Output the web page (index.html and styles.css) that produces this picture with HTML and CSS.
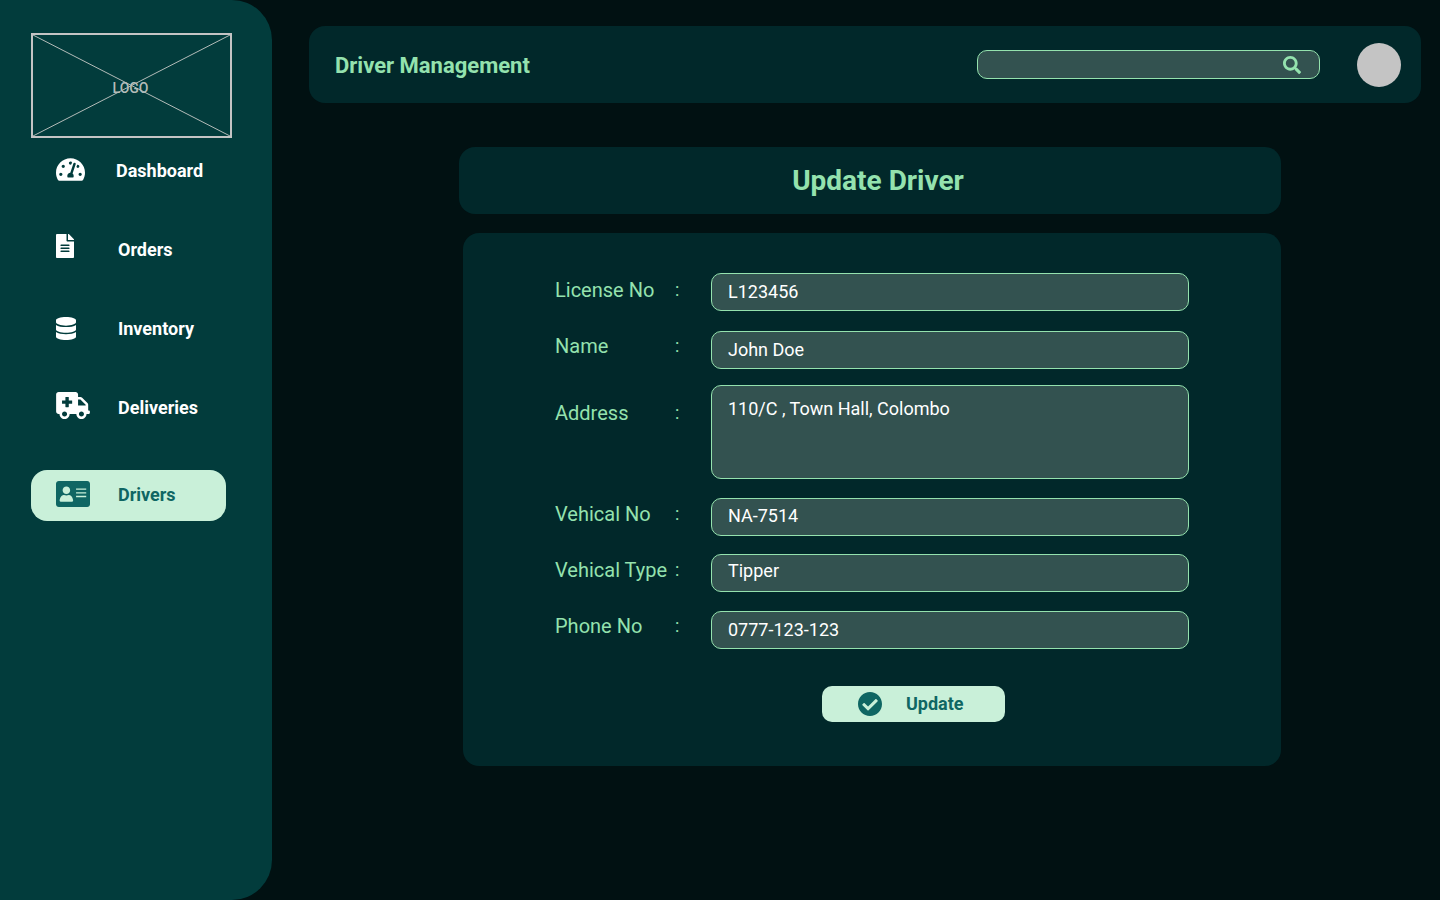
FILE: index.html
```html
<!DOCTYPE html>
<html lang="en">
<head>
<meta charset="utf-8">
<title>Driver Management</title>
<link rel="stylesheet" href="styles.css">
</head>
<body>
<aside class="sidebar">
  <div class="logo">
    <svg class="logo-cross" viewBox="0 0 198 102" preserveAspectRatio="none"><path d="M0 0L198 102M198 0L0 102"/></svg>
    <span class="logo-text">LOGO</span>
  </div>
  <nav class="nav">
    <a class="nav-item item-dashboard">
      <svg class="icon icon-dashboard" viewBox="0 32 576 448"><path d="M288 32C128.94 32 0 160.94 0 320c0 52.8 14.25 102.26 39.06 144.8 5.61 9.62 16.3 15.2 27.44 15.2h443c11.14 0 21.83-5.58 27.44-15.2C561.75 422.26 576 372.8 576 320c0-159.06-128.94-288-288-288zm0 64c14.71 0 26.58 10.13 30.32 23.65-1.11 2.26-2.64 4.23-3.45 6.67l-9.22 27.67c-5.13 3.49-10.97 6.01-17.64 6.01-17.67 0-32-14.33-32-32S270.33 96 288 96zM96 384c-17.67 0-32-14.33-32-32s14.33-32 32-32 32 14.33 32 32-14.33 32-32 32zm48-160c-17.67 0-32-14.33-32-32s14.33-32 32-32 32 14.33 32 32-14.33 32-32 32zm246.77-72.41l-61.33 184C343.13 347.33 352 364.54 352 384c0 11.72-3.38 22.55-8.88 32H232.88c-5.5-9.45-8.88-20.28-8.88-32 0-33.94 26.5-61.43 59.9-63.59l61.34-184.01c4.17-12.56 17.73-19.45 30.36-15.17 12.57 4.19 19.35 17.79 15.17 30.36zm14.66 57.2l15.52-46.55c3.47-1.29 7.13-2.23 11.05-2.23 17.67 0 32 14.33 32 32s-14.33 32-32 32c-11.38-.01-20.89-6.28-26.57-15.22zM480 384c-17.67 0-32-14.33-32-32s14.33-32 32-32 32 14.33 32 32-14.33 32-32 32z"/></svg>
      <span>Dashboard</span>
    </a>
    <a class="nav-item item-orders">
      <svg class="icon icon-orders" viewBox="0 0 384 512"><path d="M224 136V0H24C10.7 0 0 10.7 0 24v464c0 13.3 10.7 24 24 24h336c13.3 0 24-10.7 24-24V160H248c-13.2 0-24-10.8-24-24zm64 236c0 6.6-5.4 12-12 12H108c-6.6 0-12-5.4-12-12v-8c0-6.6 5.4-12 12-12h168c6.6 0 12 5.4 12 12v8zm0-64c0 6.6-5.4 12-12 12H108c-6.6 0-12-5.4-12-12v-8c0-6.6 5.4-12 12-12h168c6.6 0 12 5.4 12 12v8zm0-72v8c0 6.6-5.4 12-12 12H108c-6.6 0-12-5.4-12-12v-8c0-6.6 5.4-12 12-12h168c6.6 0 12 5.4 12 12zm96-114.1v6.1H256V0h6.1c6.4 0 12.5 2.5 17 7l97.9 98c4.5 4.5 7 10.6 7 16.9z"/></svg>
      <span>Orders</span>
    </a>
    <a class="nav-item item-inventory">
      <svg class="icon icon-inventory" viewBox="0 0 448 512" preserveAspectRatio="none"><path d="M448 73.143v45.714C448 159.143 347.667 192 224 192S0 159.143 0 118.857V73.143C0 32.857 100.333 0 224 0s224 32.857 224 73.143zM448 176v102.857C448 319.143 347.667 352 224 352S0 319.143 0 278.857V176c48.125 33.143 136.208 48.572 224 48.572S399.874 209.143 448 176zm0 160v102.857C448 479.143 347.667 512 224 512S0 479.143 0 438.857V336c48.125 33.143 136.208 48.572 224 48.572S399.874 369.143 448 336z"/></svg>
      <span>Inventory</span>
    </a>
    <a class="nav-item item-deliveries">
      <svg class="icon icon-deliveries" viewBox="0 0 640 512"><path d="M624 352h-16V243.9c0-12.7-5.1-24.9-14.1-33.9L494 110.1c-9-9-21.2-14.1-33.9-14.1H416V48c0-26.5-21.5-48-48-48H48C21.5 0 0 21.5 0 48v320c0 26.5 21.5 48 48 48h16c0 53 43 96 96 96s96-43 96-96h128c0 53 43 96 96 96s96-43 96-96h48c8.8 0 16-7.2 16-16v-32c0-8.8-7.2-16-16-16zM160 464c-26.5 0-48-21.5-48-48s21.5-48 48-48 48 21.5 48 48-21.5 48-48 48zm144-248c0 4.4-3.6 8-8 8h-56v56c0 4.4-3.6 8-8 8h-48c-4.4 0-8-3.6-8-8v-56h-56c-4.4 0-8-3.6-8-8v-48c0-4.4 3.6-8 8-8h56v-56c0-4.4 3.6-8 8-8h48c4.4 0 8 3.6 8 8v56h56c4.4 0 8 3.6 8 8v48zm176 248c-26.5 0-48-21.5-48-48s21.5-48 48-48 48 21.5 48 48-21.5 48-48 48zm80-208H416V144h44.1l99.9 99.9V256z"/></svg>
      <span>Deliveries</span>
    </a>
    <a class="nav-item item-drivers">
      <svg class="icon icon-drivers" viewBox="0 32 576 448" preserveAspectRatio="none"><path d="M528 32H48C21.5 32 0 53.5 0 80v352c0 26.5 21.5 48 48 48h480c26.5 0 48-21.5 48-48V80c0-26.5-21.5-48-48-48zM340 160h172v24H340zm0 64h172v24H340zm0 64h172v24H340zM176 128c35.3 0 64 28.7 64 64s-28.7 64-64 64-64-28.7-64-64 28.7-64 64-64zM62 368C66 320 96 272 128 272h8.2c12.3 5.1 25.7 8 39.8 8s27.6-2.9 39.8-8h8.2c32 0 62 48 66 96 .8 10-6 20-16 20H78c-10 0-16.800-10-16-20z" fill-rule="evenodd"/></svg>
      <span>Drivers</span>
    </a>
  </nav>
</aside>

<main class="main">
  <header class="topbar">
    <h1 class="topbar-title">Driver Management</h1>
    <div class="search">
      <svg class="search-icon" viewBox="0 0 512 512"><path d="M505 442.7L405.3 343c-4.5-4.5-10.6-7-17-7H372c27.6-35.3 44-79.7 44-128C416 93.1 322.9 0 208 0S0 93.1 0 208s93.1 208 208 208c48.3 0 92.7-16.4 128-44v16.3c0 6.4 2.5 12.5 7 17l99.7 99.7c9.4 9.4 24.6 9.4 33.9 0l28.3-28.3c9.4-9.4 9.4-24.6.1-34zM208 336c-70.7 0-128-57.2-128-128 0-70.7 57.2-128 128-128 70.7 0 128 57.2 128 128 0 70.7-57.2 128-128 128z"/></svg>
    </div>
    <div class="avatar"></div>
  </header>

  <section class="title-card"><h2 class="title-text">Update Driver</h2></section>

  <section class="form-card">
    <div class="row row-license"><span class="label">License No</span><span class="colon">:</span><div class="field">L123456</div></div>
    <div class="row row-name"><span class="label">Name</span><span class="colon">:</span><div class="field">John Doe</div></div>
    <div class="row row-address"><span class="label">Address</span><span class="colon">:</span><div class="field field-area">110/C , Town Hall, Colombo</div></div>
    <div class="row row-vno"><span class="label">Vehical No</span><span class="colon">:</span><div class="field field-up1">NA-7514</div></div>
    <div class="row row-vtype"><span class="label">Vehical Type</span><span class="colon">:</span><div class="field field-up2">Tipper</div></div>
    <div class="row row-phone"><span class="label">Phone No</span><span class="colon">:</span><div class="field">0777-123-123</div></div>
    <button class="update-btn" type="button">
      <svg class="check-icon" viewBox="8 8 496 496"><path d="M504 256c0 136.967-111.033 248-248 248S8 392.967 8 256 119.033 8 256 8s248 111.033 248 248zM227.314 387.314l184-184c6.248-6.248 6.248-16.379 0-22.627l-22.627-22.627c-6.248-6.249-16.379-6.249-22.628 0L216 308.118l-70.059-70.059c-6.248-6.248-16.379-6.248-22.628 0l-22.627 22.627c-6.248 6.248-6.248 16.379 0 22.627l104 104c6.249 6.249 16.379 6.249 22.628.001z"/></svg>
      <span class="update-label">Update</span>
    </button>
  </section>
</main>
</body>
</html>
```

FILE: styles.css
```css
* { box-sizing: border-box; }

html, body { height: 100%; }

body {
  margin: 0;
  display: flex;
  height: 900px;
  overflow: hidden;
  background: #011112;
  font-family: Roboto, "Liberation Sans", sans-serif;
}

/* Sidebar */
.sidebar {
  flex: 0 0 272px;
  height: 900px;
  padding: 33px 0 0 31px;
  background: #023c3c;
  border-radius: 0 40px 40px 0;
}

.logo {
  position: relative;
  display: flex;
  align-items: center;
  justify-content: center;
  width: 201px;
  height: 105px;
  border: 2px solid #c4c4c4;
}

.logo-cross {
  position: absolute;
  inset: 0;
  width: 100%;
  height: 100%;
}

.logo-cross path {
  fill: none;
  stroke: #b4bcb9;
  stroke-width: 1;
  vector-effect: non-scaling-stroke;
}

.logo-text {
  position: relative;
  margin: 4px 2px 0 0;
  font-size: 14px;
  font-weight: 500;
  line-height: 16px;
  color: #b4bcb9;
}

.nav {
  display: flex;
  flex-direction: column;
  width: 195px;
  margin-top: 7px;
}

.nav-item {
  display: flex;
  align-items: center;
  height: 51px;
  margin-bottom: 28px;
  padding-left: 25px;
  border-radius: 16px;
  font-size: 18px;
  font-weight: 700;
  line-height: 21px;
  color: #fff;
}

.nav-item span { display: block; }

.icon { display: block; flex: none; fill: #fff; }

.icon-dashboard { width: 29px; height: 23px; margin: -2px 31px 0 0; }
.icon-orders { width: 18px; height: 24px; margin: -8px 44px 0 0; }
.icon-inventory { width: 20px; height: 23px; margin: -1px 42px 0 0; }
.icon-deliveries { width: 34px; height: 27px; margin: -4px 28px 0 0; }
.icon-drivers { width: 34px; height: 26px; margin: -3px 28px 0 0; fill: #0f6663; }

.item-drivers {
  margin-top: 9px;
  margin-bottom: 0;
  background: #c9f0d9;
  color: #0f6663;
}

.item-drivers span { margin-top: -3px; }

/* Main column */
.main {
  flex: 1;
  padding: 26px 19px 0 37px;
}

.topbar {
  display: flex;
  align-items: center;
  height: 77px;
  padding: 0 20px 0 26px;
  background: #01282a;
  border-radius: 16px;
}

.topbar-title {
  flex: 1;
  margin: 2px 0 0;
  font-size: 22px;
  font-weight: 700;
  line-height: 26px;
  color: #94e2ae;
}

.search {
  display: flex;
  align-items: center;
  justify-content: flex-end;
  width: 343px;
  height: 29px;
  margin: -1px 37px 0 0;
  padding: 1px 18px 0 0;
  background: #335250;
  border: 1px solid #94e2ae;
  border-radius: 10px;
}

.search-icon { width: 18px; height: 18px; fill: #94e2ae; }

.avatar {
  flex: none;
  width: 44px;
  height: 44px;
  border-radius: 50%;
  background: #c4c4c4;
}

.title-card {
  width: 822px;
  height: 67px;
  margin: 44px 0 0 150px;
  padding-top: 17px;
  background: #01282a;
  border-radius: 16px;
  text-align: center;
}

.title-text {
  margin: 0 0 0 16px;
  font-size: 28px;
  font-weight: 700;
  line-height: 33px;
  color: #94e2ae;
}

.form-card {
  width: 818px;
  height: 533px;
  margin: 19px 0 0 154px;
  padding: 40px 0 0 92px;
  background: #01282a;
  border-radius: 16px;
}

.row {
  display: grid;
  grid-template-columns: 120px 36px 478px;
  align-items: start;
  font-size: 20px;
  line-height: 24px;
  color: #94e2ae;
}

.label, .colon { display: block; padding-top: 5px; }
.colon { font-size: 18px; }

.field {
  height: 38px;
  padding: 0 16px;
  background: #335250;
  border: 1px solid #94e2ae;
  border-radius: 10px;
  font-size: 18px;
  line-height: 36px;
  color: #fff;
}

.field-up1 { line-height: 34px; }
.field-up2 { line-height: 32px; }
.field-area { height: 94px; line-height: 21px; padding-top: 12px; }

.row-name { margin-top: 20px; }
.row-name .label, .row-name .colon { padding-top: 3px; }
.row-address { margin-top: 16px; }
.row-address .label, .row-address .colon { padding-top: 16px; }
.row-vno { margin-top: 19px; }
.row-vno .label, .row-vno .colon { padding-top: 4px; }
.row-vtype { margin-top: 18px; }
.row-vtype .label, .row-vtype .colon { padding-top: 4px; }
.row-phone { margin-top: 19px; }
.row-phone .label, .row-phone .colon { padding-top: 3px; }

.update-btn {
  display: flex;
  align-items: center;
  width: 183px;
  height: 36px;
  margin: 37px 0 0 267px;
  padding: 0 0 0 36px;
  background: #c9f0d9;
  border: 0;
  border-radius: 10px;
  font-family: inherit;
  font-size: 18px;
  font-weight: 700;
  color: #0f6663;
}

.update-label { margin-top: -2px; }

.check-icon { width: 24px; height: 24px; margin-right: 24px; fill: #0f6663; }
```
